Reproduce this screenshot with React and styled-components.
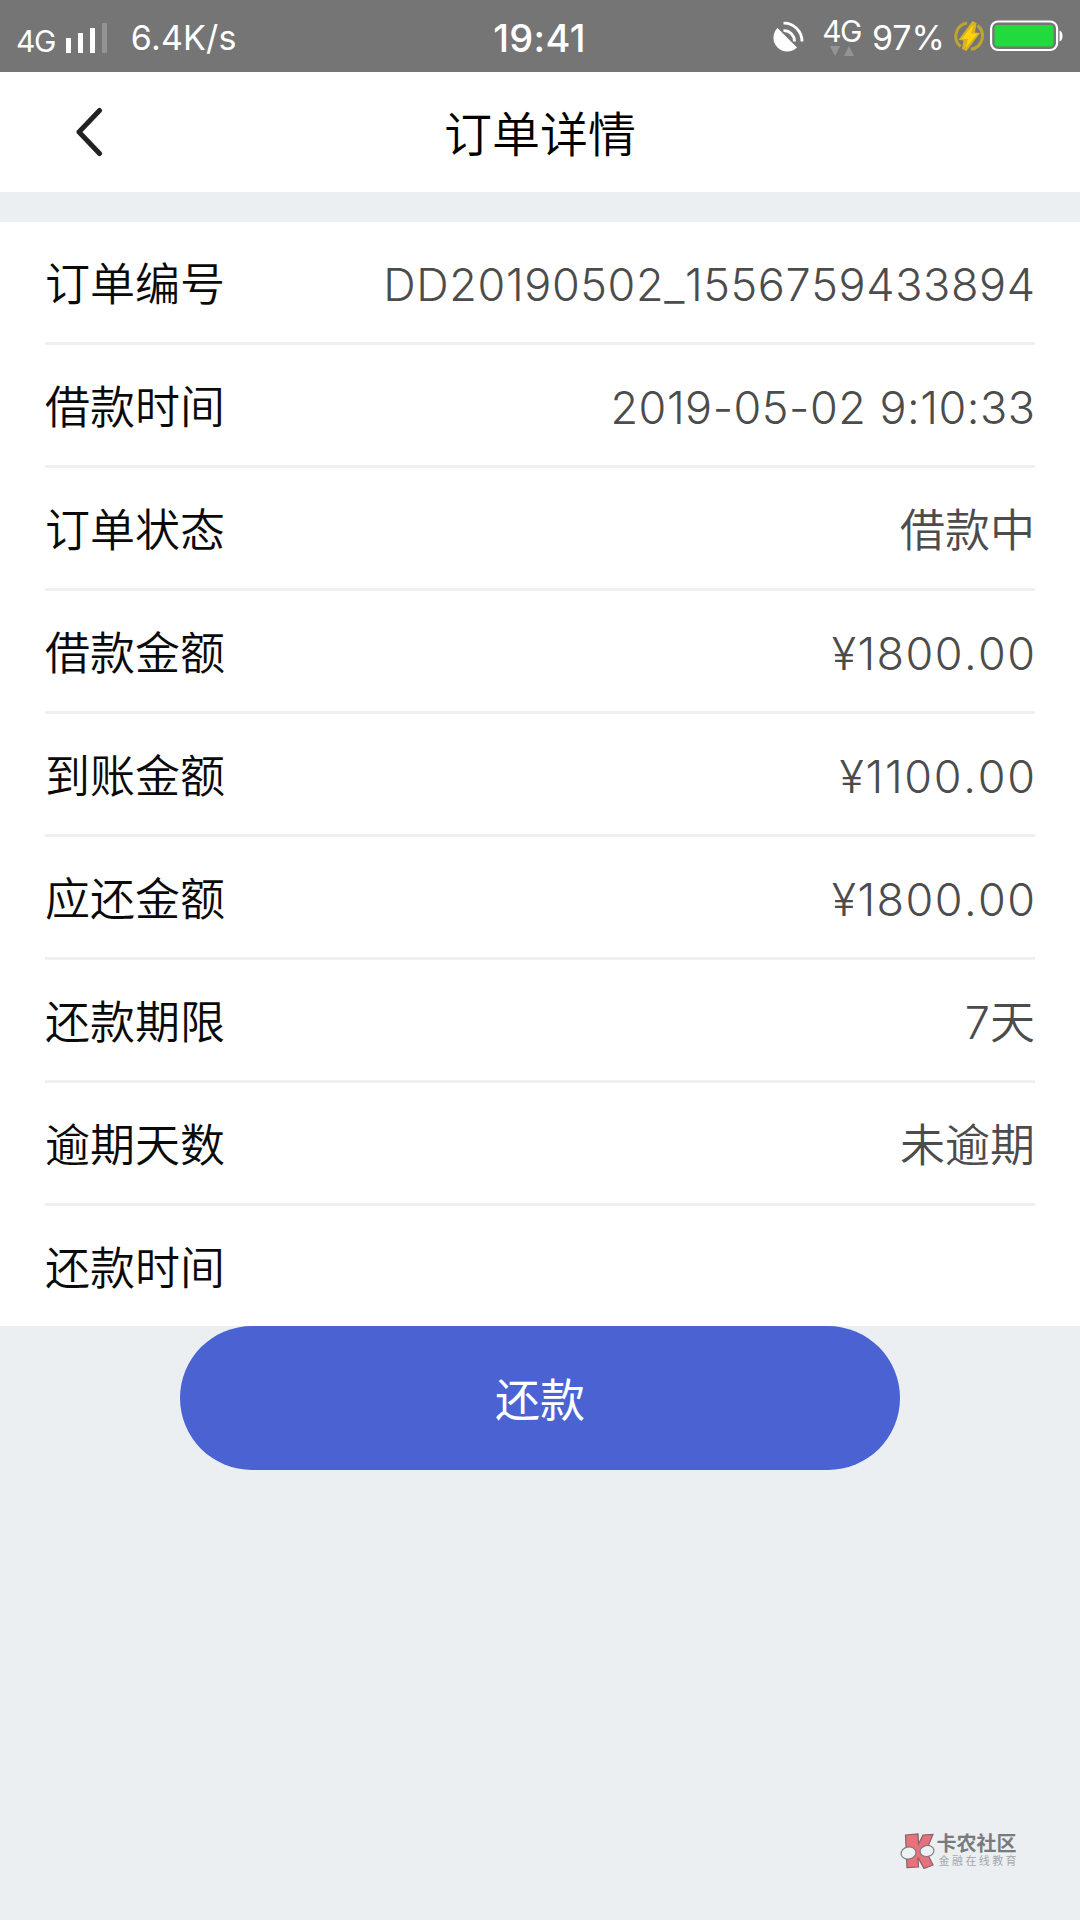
import React from "react";
import styled, { createGlobalStyle } from "styled-components";

const GlobalStyle = createGlobalStyle`
  * { box-sizing: border-box; }
  body { margin: 0; background: #ebeff2; }
`;

const Screen = styled.div`
  width: 1080px;
  height: 1920px;
  background: #ebeff2;
  display: flex;
  flex-direction: column;
  overflow: hidden;
  font-family: Inter, "Noto Sans CJK SC", sans-serif;
`;

const StatusBar = styled.header`
  height: 72px;
  background: #757575;
  color: #fff;
  display: grid;
  grid-template-columns: 1fr auto 1fr;
  align-items: center;
  padding: 0 17px 0 16px;
`;

const StatusGroup = styled.div`
  display: flex;
  align-items: center;
  height: 72px;
  justify-content: ${(p) => (p.$end ? "flex-end" : "flex-start")};
`;

const StatusText = styled.span`
  font-size: ${(p) => p.$size}px;
  font-weight: ${(p) => p.$weight || 400};
  letter-spacing: ${(p) => p.$spacing || 0}px;
  line-height: 1;
  white-space: nowrap;
  margin-left: ${(p) => p.$left || 0}px;
  padding-top: ${(p) => p.$drop || 0}px;
`;

const StatusIcon = styled.svg`
  display: block;
  flex: none;
  margin-left: ${(p) => p.$left || 0}px;
`;

const NetworkStack = styled.div`
  display: flex;
  flex-direction: column;
  align-items: center;
  margin-left: 18px;
`;

const NavBar = styled.nav`
  height: 120px;
  background: #fff;
  display: grid;
  grid-template-columns: 180px 1fr 180px;
  align-items: center;
`;

const BackButton = styled.button`
  border: 0;
  background: none;
  padding: 0 0 0 75px;
  height: 120px;
  display: flex;
  align-items: center;
`;

const Title = styled.h1`
  margin: 0;
  padding-top: 6px;
  font-size: 48px;
  line-height: 60px;
  font-weight: 350;
  color: #000;
  text-align: center;
`;

const Details = styled.dl`
  margin: 30px 0 0;
  padding: 0 45px;
  background: #fff;
`;

const Row = styled.div`
  display: flex;
  justify-content: space-between;
  align-items: center;
  height: 123px;
  border-bottom: 3px solid #f0f0f0;
  &:last-child {
    height: 120px;
    border-bottom: 0;
  }
`;

const Label = styled.dt`
  font-size: 45px;
  line-height: 60px;
  font-weight: 350;
  color: #0a0a0a;
  padding-top: 6px;
`;

const Value = styled.dd`
  margin: 0;
  font-size: 45px;
  line-height: 60px;
  font-weight: ${(p) => (p.$han ? 350 : 300)};
  font-kerning: none;
  color: #4c4c4c;
  padding-top: 6px;
  letter-spacing: ${(p) => p.$spacing || 0}px;
  margin-right: ${(p) => -(p.$spacing || 0)}px;
`;

const PayButton = styled.button`
  align-self: center;
  width: 720px;
  height: 144px;
  border: 0;
  border-radius: 72px;
  background: #4a62d2;
  color: #fff;
  font-family: inherit;
  font-size: 45px;
  font-weight: 400;
  padding: 0 0 2px;
`;

const Watermark = styled.footer`
  margin: auto 61px 50px auto;
  display: flex;
  align-items: center;
  gap: 2px;
`;

const WatermarkText = styled.div`
  display: flex;
  flex-direction: column;
`;

const Brand = styled.strong`
  font-size: 20px;
  line-height: 21px;
  font-weight: 700;
  color: #777b80;
`;

const Slogan = styled.span`
  font-size: 11px;
  line-height: 13px;
  letter-spacing: 2.4px;
  color: #a3a7ab;
  padding-left: 2px;
`;

const details = [
  { label: "订单编号", value: "DD20190502_1556759433894", spacing: 0.6 },
  { label: "借款时间", value: "2019-05-02 9:10:33", spacing: 0.5 },
  { label: "订单状态", value: "借款中", han: true },
  { label: "借款金额", value: "¥1800.00", spacing: 1.4 },
  { label: "到账金额", value: "¥1100.00", spacing: 1.7 },
  { label: "应还金额", value: "¥1800.00", spacing: 1.4 },
  { label: "还款期限", value: "7天", han: true },
  { label: "逾期天数", value: "未逾期", han: true },
  { label: "还款时间", value: "" },
];

export default function App() {
  return (
    <Screen>
      <GlobalStyle />
      <StatusBar>
        <StatusGroup>
          <StatusText $size={30} $spacing={-1.5} $drop={10}>4G</StatusText>
          <StatusIcon $left={10} width="43" height="34" viewBox="0 0 43 34">
            <g transform="translate(0 4)" fill="#fff">
              <rect x="1" y="15" width="5" height="15" />
              <rect x="13" y="10" width="5" height="20" />
              <rect x="25" y="5" width="5" height="25" />
              <rect x="37" y="0" width="5" height="30" opacity=".22" />
            </g>
          </StatusIcon>
          <StatusText $size={34} $left={23} $spacing={0.2} $drop={3}>6.4K/s</StatusText>
        </StatusGroup>
        <StatusText $size={38} $weight={500} $spacing={0.3} $drop={3}>19:41</StatusText>
        <StatusGroup $end>
          <StatusIcon width="31" height="31" viewBox="0 0 31 31">
            <path d="M4.500 7 24 26.500A13.600 13.600 0 0 1 4.500 7Z" fill="#fff" />
            <path d="M10.500 9.700A10.500 10.500 0 0 1 21.500 20.500" fill="none" stroke="#fff" strokeWidth="2.800" />
            <path d="M10.500 2.200A18 18 0 0 1 29 20.500" fill="none" stroke="#fff" strokeWidth="2.800" />
          </StatusIcon>
          <NetworkStack>
            <StatusText $size={30} $spacing={-1.5}>4G</StatusText>
            <StatusIcon width="24" height="10" viewBox="0 0 24 10">
              <path d="M0 0h10L5 10zM14 10h10L19 0z" fill="#949494" />
            </StatusIcon>
          </NetworkStack>
          <StatusText $size={34} $left={11} $drop={4}>97%</StatusText>
          <StatusIcon $left={7} width="34" height="34" viewBox="0 0 34 34">
            <g fill="none" stroke="#bfa52f" strokeWidth="3">
              <path d="M15 4A13.500 13.500 0 0 0 8.500 27.500" />
              <path d="M25.500 6.500A13.500 13.500 0 0 1 19 30.300" />
            </g>
            <path d="M20.500 2 24.500 4 23 13.500 28 14 14.500 32 10 30 11.500 21.500 6.500 21Z" fill="#d9b321" />
            <path d="M21.500 5.500 9.500 20h6.500l-2.500 9L25.500 14.500h-6.500Z" fill="#ffd40a" />
          </StatusIcon>
          <StatusIcon $left={4} width="73" height="32" viewBox="0 0 73 32">
            <rect x="1.100" y="1.500" width="66" height="28.500" rx="7" fill="none" stroke="#fff" strokeWidth="2.200" />
            <rect x="4.500" y="5" width="59" height="21.500" rx="3" fill="#21da3c" />
            <path d="M69.500 10.500q3 1 3 5.500t-3 5.500z" fill="#fff" />
          </StatusIcon>
        </StatusGroup>
      </StatusBar>
      <NavBar>
        <BackButton aria-label="返回">
          <svg width="28" height="50" viewBox="0 0 28 50">
            <path d="M24.500 3.500 4 25 24.500 46.500" fill="none" stroke="#222" strokeWidth="5" strokeLinecap="round" strokeLinejoin="round" />
          </svg>
        </BackButton>
        <Title>订单详情</Title>
      </NavBar>
      <Details>
        {details.map((d) => (
          <Row key={d.label}>
            <Label>{d.label}</Label>
            <Value $spacing={d.spacing} $han={d.han}>{d.value}</Value>
          </Row>
        ))}
      </Details>
      <PayButton>还款</PayButton>
      <Watermark>
        <svg width="35" height="38" viewBox="0 0 35 38">
          <path d="M5.500 3 18 2l.5 10L23 3l10-.5L26 19l7 14-9 3.500-6-11 .5 9.500L7 35.500Z" fill="#e8717b" stroke="#83646b" strokeWidth="1.200" />
          <g fill="#eff2f4" stroke="#7d7d80" strokeWidth="1.200">
            <ellipse cx="8.500" cy="21" rx="7.500" ry="6" transform="rotate(-12 8.500 21)" />
            <ellipse cx="27" cy="19" rx="7" ry="5.500" transform="rotate(-12 27 19)" />
          </g>
        </svg>
        <WatermarkText>
          <Brand>卡农社区</Brand>
          <Slogan>金融在线教育</Slogan>
        </WatermarkText>
      </Watermark>
    </Screen>
  );
}
